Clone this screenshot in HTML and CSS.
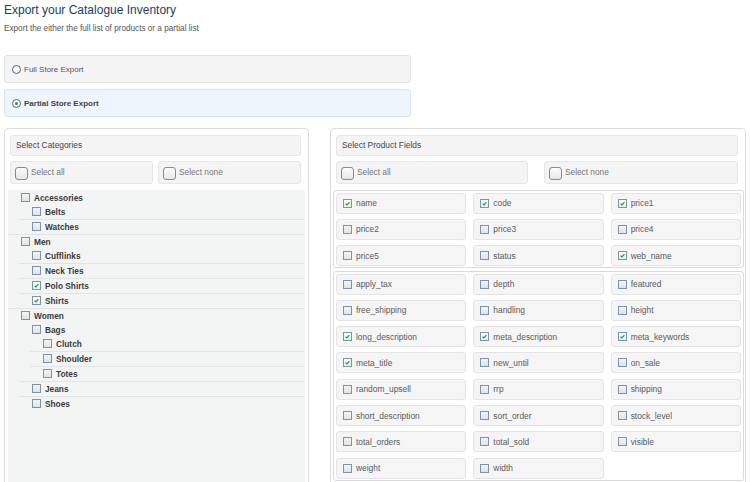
FILE: index.html
```html
<!DOCTYPE html>
<html>
<head>
<meta charset="utf-8">
<link rel="stylesheet" href="styles.css">
</head>
<body>
<div class="page">
  <h1 class="title">Export your Catalogue Inventory</h1>
  <p class="subtitle">Export the either the full list of products or a partial list</p>

  <div class="option"><span class="radio"></span>Full Store Export</div>
  <div class="option selected"><span class="radio on"></span>Partial Store Export</div>

  <div class="panels">
    <section class="panel cats">
      <div class="panel-head">Select Categories</div>
      <div class="select-row">
        <div class="select-box"><span class="bigcb"></span>Select all</div>
        <div class="select-box"><span class="bigcb"></span>Select none</div>
      </div>
      <ul class="tree">
        <li><label class="node"><span class="cb"></span>Accessories</label>
          <ul>
            <li><label class="node"><span class="cb"></span>Belts</label></li>
            <li><label class="node"><span class="cb"></span>Watches</label></li>
          </ul>
        </li>
        <li><label class="node"><span class="cb"></span>Men</label>
          <ul>
            <li><label class="node"><span class="cb"></span>Cufflinks</label></li>
            <li><label class="node"><span class="cb"></span>Neck Ties</label></li>
            <li><label class="node"><span class="cb on"><svg viewBox="0 0 9 9"><path d="M2 4.6 L3.7 6.3 L7 2.6"/></svg></span>Polo Shirts</label></li>
            <li><label class="node"><span class="cb on"><svg viewBox="0 0 9 9"><path d="M2 4.6 L3.7 6.3 L7 2.6"/></svg></span>Shirts</label></li>
          </ul>
        </li>
        <li><label class="node"><span class="cb"></span>Women</label>
          <ul>
            <li><label class="node"><span class="cb"></span>Bags</label>
              <ul>
                <li><label class="node"><span class="cb"></span>Clutch</label></li>
                <li><label class="node"><span class="cb"></span>Shoulder</label></li>
                <li><label class="node"><span class="cb"></span>Totes</label></li>
              </ul>
            </li>
            <li><label class="node"><span class="cb"></span>Jeans</label></li>
            <li><label class="node"><span class="cb"></span>Shoes</label></li>
          </ul>
        </li>
      </ul>
    </section>

    <section class="panel fields">
      <div class="panel-head">Select Product Fields</div>
      <div class="select-row wide">
        <div class="select-box"><span class="bigcb"></span>Select all</div>
        <div class="select-box"><span class="bigcb"></span>Select none</div>
      </div>
      <div class="group">
        <div class="field"><span class="cb on"><svg viewBox="0 0 9 9"><path d="M2 4.6 L3.7 6.3 L7 2.6"/></svg></span>name</div>
        <div class="field"><span class="cb on"><svg viewBox="0 0 9 9"><path d="M2 4.6 L3.7 6.3 L7 2.6"/></svg></span>code</div>
        <div class="field"><span class="cb on"><svg viewBox="0 0 9 9"><path d="M2 4.6 L3.7 6.3 L7 2.6"/></svg></span>price1</div>
        <div class="field"><span class="cb"></span>price2</div>
        <div class="field"><span class="cb"></span>price3</div>
        <div class="field"><span class="cb"></span>price4</div>
        <div class="field"><span class="cb"></span>price5</div>
        <div class="field"><span class="cb"></span>status</div>
        <div class="field"><span class="cb on"><svg viewBox="0 0 9 9"><path d="M2 4.6 L3.7 6.3 L7 2.6"/></svg></span>web_name</div>
      </div>
      <div class="group second">
        <div class="field"><span class="cb"></span>apply_tax</div>
        <div class="field"><span class="cb"></span>depth</div>
        <div class="field"><span class="cb"></span>featured</div>
        <div class="field"><span class="cb"></span>free_shipping</div>
        <div class="field"><span class="cb"></span>handling</div>
        <div class="field"><span class="cb"></span>height</div>
        <div class="field"><span class="cb on"><svg viewBox="0 0 9 9"><path d="M2 4.6 L3.7 6.3 L7 2.6"/></svg></span>long_description</div>
        <div class="field"><span class="cb on"><svg viewBox="0 0 9 9"><path d="M2 4.6 L3.7 6.3 L7 2.6"/></svg></span>meta_description</div>
        <div class="field"><span class="cb on"><svg viewBox="0 0 9 9"><path d="M2 4.6 L3.7 6.3 L7 2.6"/></svg></span>meta_keywords</div>
        <div class="field"><span class="cb on"><svg viewBox="0 0 9 9"><path d="M2 4.6 L3.7 6.3 L7 2.6"/></svg></span>meta_title</div>
        <div class="field"><span class="cb"></span>new_until</div>
        <div class="field"><span class="cb"></span>on_sale</div>
        <div class="field"><span class="cb"></span>random_upsell</div>
        <div class="field"><span class="cb"></span>rrp</div>
        <div class="field"><span class="cb"></span>shipping</div>
        <div class="field"><span class="cb"></span>short_description</div>
        <div class="field"><span class="cb"></span>sort_order</div>
        <div class="field"><span class="cb"></span>stock_level</div>
        <div class="field"><span class="cb"></span>total_orders</div>
        <div class="field"><span class="cb"></span>total_sold</div>
        <div class="field"><span class="cb"></span>visible</div>
        <div class="field"><span class="cb"></span>weight</div>
        <div class="field"><span class="cb"></span>width</div>
      </div>
    </section>
  </div>
</div>
</body>
</html>
```

FILE: styles.css
```css
* { box-sizing: border-box; }

html, body {
  margin: 0;
  padding: 0;
  background: #ffffff;
  overflow: hidden;
  height: 482px;
}

body {
  font-family: "Liberation Sans", Arial, sans-serif;
  color: #444;
}

.page {
  padding: 0 4px;
}

.title {
  margin: 0;
  padding-top: 3px;
  font-size: 12px;
  line-height: 15px;
  font-weight: normal;
  color: #1d3d5e;
}

.subtitle {
  margin: 6px 0 0;
  font-size: 8.2px;
  line-height: 10px;
  color: #555;
}

.option {
  width: 407px;
  height: 28px;
  margin-top: 21px;
  display: flex;
  align-items: center;
  padding-left: 7px;
  background: #f4f4f4;
  border: 1px solid #e2e2e2;
  border-radius: 3px;
  font-size: 8px;
  color: #555;
}

.option.selected {
  margin-top: 6px;
  background: #eef5fd;
  border-color: #d6e5f4;
  font-weight: bold;
  color: #444;
}

.radio {
  width: 9px;
  height: 9px;
  border: 1px solid #4d6985;
  border-radius: 50%;
  background: linear-gradient(#ffffff, #eeeeee);
  margin-right: 3px;
  display: flex;
  align-items: center;
  justify-content: center;
}

.radio.on::after {
  content: "";
  width: 3px;
  height: 3px;
  border-radius: 50%;
  background: #2f9a2f;
}

.panels {
  display: flex;
  align-items: flex-start;
  gap: 21px;
  margin-top: 11px;
}

.panel {
  border: 1px solid #dcdcdc;
  border-radius: 4px;
  height: 420px;
  padding-top: 5.5px;
}

.cats {
  width: 305px;
  padding-left: 3px;
  padding-right: 3px;
}

.fields {
  width: 416px;
  padding-left: 2px;
  padding-right: 1px;
}

.panel-head {
  height: 21px;
  display: flex;
  align-items: center;
  padding-left: 5px;
  background: #f4f4f4;
  border: 1px solid #e6e6e6;
  border-radius: 3px;
  font-size: 8.4px;
  color: #444;
}

.cats .panel-head { margin: 0 4px 0 2px; }
.fields .panel-head { margin: 0 6px 0 3px; }

.select-row {
  display: grid;
  grid-template-columns: 1fr 1fr;
  gap: 5px;
  margin: 5px 4px 0 2px;
}

.select-row.wide {
  grid-template-columns: 192px 1fr;
  gap: 16px;
  margin: 5px 6px 0 3px;
}

.select-box {
  height: 23.5px;
  display: flex;
  align-items: center;
  padding-left: 4px;
  background: #f4f4f4;
  border: 1px solid #e6e6e6;
  border-radius: 3px;
  font-size: 8.3px;
  color: #777;
}

.bigcb {
  width: 13px;
  height: 13px;
  margin-right: 3px;
  border: 1px solid #7b8da0;
  border-radius: 3px;
  background: linear-gradient(#fafafa, #e9e9e9);
  position: relative;
  top: 1px;
}

.cb {
  width: 9px;
  height: 9px;
  flex: none;
  border: 1px solid #7b93ac;
  background: linear-gradient(#f4f4f4, #e2e2e2);
  display: inline-flex;
  align-items: center;
  justify-content: center;
}

.cb svg {
  width: 7px;
  height: 7px;
  fill: none;
  stroke: #22a022;
  stroke-width: 1.5;
}

.cb.on { background: linear-gradient(#ffffff, #e9ecef); }

/* category tree */
.tree {
  list-style: none;
  margin: 5.5px 0 0;
  padding: 1px 0 0;
  background: #f3f5f5;
  height: 320px;
}

.tree ul {
  list-style: none;
  margin: 0 0 0 11px;
  padding: 0;
}

.tree li:not(:last-child) {
  border-bottom: 1px solid #e2e5e5;
}

.node {
  height: 14px;
  display: flex;
  align-items: center;
  padding-left: 13px;
  font-size: 8.3px;
  font-weight: bold;
  color: #3a3a3a;
}

.node .cb { margin-right: 4px; }

/* product fields */
.group {
  display: grid;
  grid-template-columns: repeat(3, 1fr);
  column-gap: 7px;
  row-gap: 5.3px;
  margin: 5.5px 0 0;
  padding: 2px 2px 1px;
  border: 1px solid #dadada;
  border-radius: 3px;
}

.group.second {
  margin-top: 2.5px;
}

.field {
  height: 21px;
  display: flex;
  align-items: center;
  padding-left: 6px;
  background: #f5f5f5;
  border: 1px solid #e4e4e4;
  border-radius: 3px;
  font-size: 8.4px;
  color: #5a5a5a;
}

.field .cb { margin-right: 4px; }
```
